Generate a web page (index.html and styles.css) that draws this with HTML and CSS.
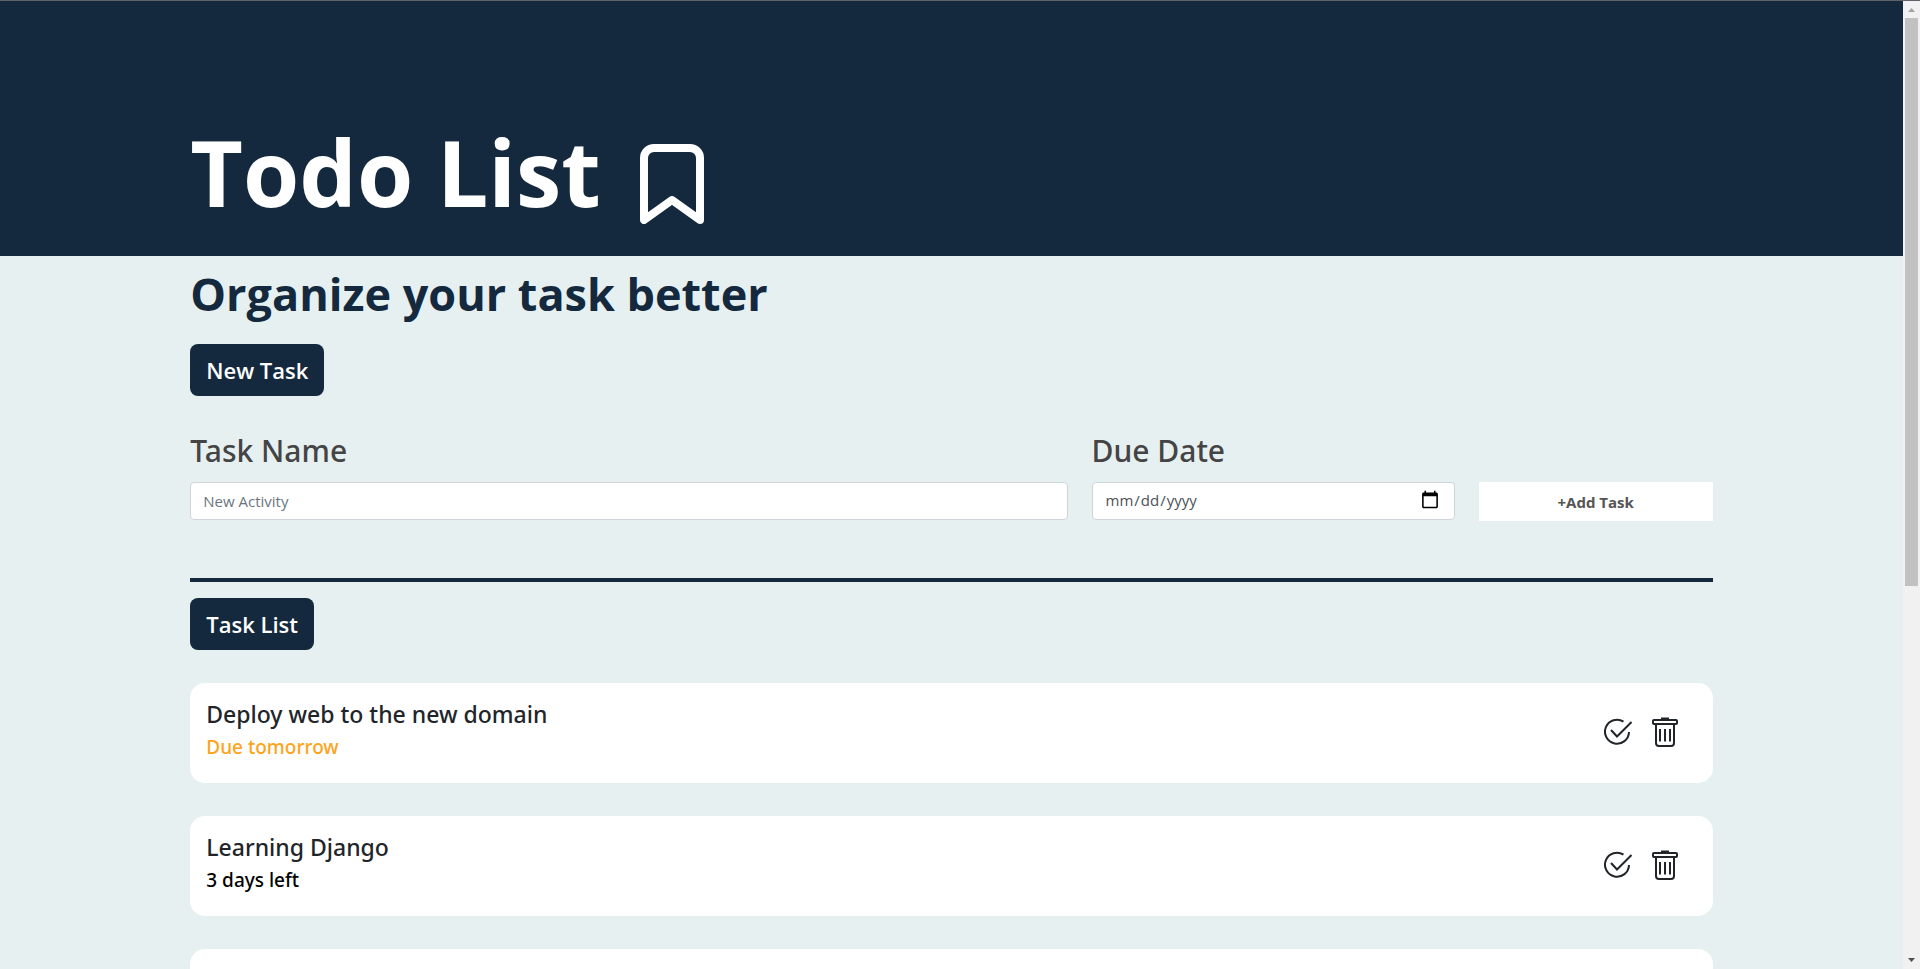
FILE: index.html
```html
<!DOCTYPE html>
<html lang="en">
<head>
<meta charset="utf-8">
<title>Todo List</title>
<link rel="stylesheet" href="styles.css">
</head>
<body>
<svg class="sprite" aria-hidden="true">
  <symbol id="check" viewBox="0 0 28 28" fill="none" stroke="#212529" stroke-width="2">
    <path d="M19.500 3.600A12 12 0 1 0 25 14"/>
    <path d="M7 12l6 6.500L27.500 4"/>
  </symbol>
  <symbol id="trash" viewBox="0 0 26 30" fill="none" stroke="#212529" stroke-width="2">
    <path d="M4 7v19q0 3 3 3h12q3 0 3-3V7"/>
    <rect x="1" y="3" width="24" height="4" rx="1"/>
    <path d="M9 1.500h8M8 12v12.500M13 12v12.500M18 12v12.500"/>
  </symbol>
</svg>
<div class="page">
  <header class="hero">
    <h1 class="title">Todo List</h1>
    <svg class="bookmark" viewBox="0 0 64 80" aria-hidden="true"><path d="M4 76V14A10 10 0 0 1 14 4h36a10 10 0 0 1 10 10v62L32 56Z"/></svg>
  </header>
  <main class="content">
    <h2 class="subtitle">Organize your task better</h2>
    <h3 class="tag">New Task</h3>
    <form class="form">
      <div class="field">
        <label class="label" for="name">Task Name</label>
        <input class="input" id="name" type="text" placeholder="New Activity">
      </div>
      <div class="field">
        <label class="label" for="due">Due Date</label>
        <input class="input date" id="due" type="date">
      </div>
      <button class="add" type="submit">+Add Task</button>
    </form>
    <hr class="rule">
    <h3 class="tag">Task List</h3>
    <ul class="tasks">
      <li class="task">
        <div class="info"><h4 class="name">Deploy web to the new domain</h4><p class="due soon">Due tomorrow</p></div>
        <button class="action" type="button" aria-label="Complete"><svg class="check"><use href="#check"/></svg></button>
        <button class="action" type="button" aria-label="Delete"><svg class="trash"><use href="#trash"/></svg></button>
      </li>
      <li class="task">
        <div class="info"><h4 class="name">Learning Django</h4><p class="due">3 days left</p></div>
        <button class="action" type="button" aria-label="Complete"><svg class="check"><use href="#check"/></svg></button>
        <button class="action" type="button" aria-label="Delete"><svg class="trash"><use href="#trash"/></svg></button>
      </li>
      <li class="task"></li>
    </ul>
  </main>
</div>
<div class="scrollbar" aria-hidden="true">
  <svg class="arrow up" viewBox="0 0 7 4"><path d="M0 4L3.500 0L7 4Z"/></svg>
  <div class="track"><div class="thumb"></div></div>
  <svg class="arrow down" viewBox="0 0 7 4"><path d="M0 0L3.500 4L7 0Z"/></svg>
</div>
</body>
</html>
```
FILE: styles.css
```css
* { box-sizing: border-box; }
body {
  margin: 0;
  height: 100vh;
  display: flex;
  overflow: hidden;
  border-top: 1px solid #5f6368;
  background: #e6f0f1;
  color: #212529;
  font-family: "Segoe UI", "Open Sans", "Noto Sans", sans-serif;
}
h1, h2, h3, h4, p, ul { margin: 0; padding: 0; }
.sprite { position: absolute; width: 0; height: 0; }
.page { flex: 1; min-width: 0; overflow: hidden; }
.hero {
  display: flex;
  align-items: flex-end;
  gap: 39px;
  padding: 119px 10% 32px;
  background: #14293d;
  color: #fff;
}
.title { font-size: 91px; line-height: 104px; font-weight: 700; }
.bookmark { width: 64px; height: 80px; fill: none; stroke: #fff; stroke-width: 8; stroke-linejoin: round; }
.content { padding: 8px 10%; }
.subtitle { margin-bottom: 20px; font-size: 45px; line-height: 60px; font-weight: 700; color: #14293d; }
.tag {
  width: fit-content;
  margin-top: 16px;
  padding: 8px 16px;
  border-radius: 8px;
  background: #14293d;
  color: #fff;
  font-size: 22px;
  line-height: 36px;
  font-weight: 600;
}
.form {
  display: grid;
  grid-template-columns: 877fr 363fr 234fr;
  gap: 24px;
  align-items: end;
  margin-top: 32px;
}
.field { display: flex; flex-direction: column; min-width: 0; padding-bottom: 1px; }
.label { margin-bottom: 8px; font: 500 30px/46px "Segoe UI", "Noto Sans", sans-serif; color: #444; }
.input {
  width: 100%;
  height: 38px;
  padding: 6px 12px;
  border: 1px solid #ced4da;
  border-radius: 4px;
  background: #fff;
  color: #212529;
  font: 400 15px "Segoe UI", "Open Sans", sans-serif;
}
.input::placeholder { color: #6c757d; }
.date { padding-bottom: 8px; color: #4d5156; }
.date::-webkit-calendar-picker-indicator { width: 20px; height: 20px; }
.add {
  height: 39px;
  border: 0;
  background: #fff;
  color: #555;
  font: 700 15px "Segoe UI", "Open Sans", sans-serif;
}
.rule { height: 4px; margin: 57px 0 0; border: 0; background: #14293d; }
.tasks { display: flex; flex-direction: column; gap: 33px; margin-top: 33px; list-style: none; }
.task {
  display: flex;
  align-items: center;
  gap: 20px;
  height: 100px;
  padding: 0 35px 0 16px;
  border-radius: 15px;
  background: #fff;
}
.info { flex: 1; padding-bottom: 6px; }
.name { font: 500 23px/34px "Segoe UI", "Noto Sans", sans-serif; }
.due { font: 500 19px/32px "Segoe UI", "Noto Sans", sans-serif; color: #000; }
.soon { color: #ffa31a; }
.action { display: flex; padding: 0 0 2px; border: 0; background: none; }
.check { width: 28px; height: 28px; }
.trash { width: 26px; height: 30px; }
.scrollbar {
  width: 17px;
  display: flex;
  flex-direction: column;
  align-items: center;
  background: #f1f1f1;
}
.track { flex: 1; width: 13px; }
.thumb { height: 568px; max-height: 100%; background: #c1c1c1; }
.arrow { width: 7px; height: 4px; }
.up { margin: 7px 0 6px; fill: #a3a3a3; }
.down { margin: 6px 0 7px; fill: #505050; }
```
